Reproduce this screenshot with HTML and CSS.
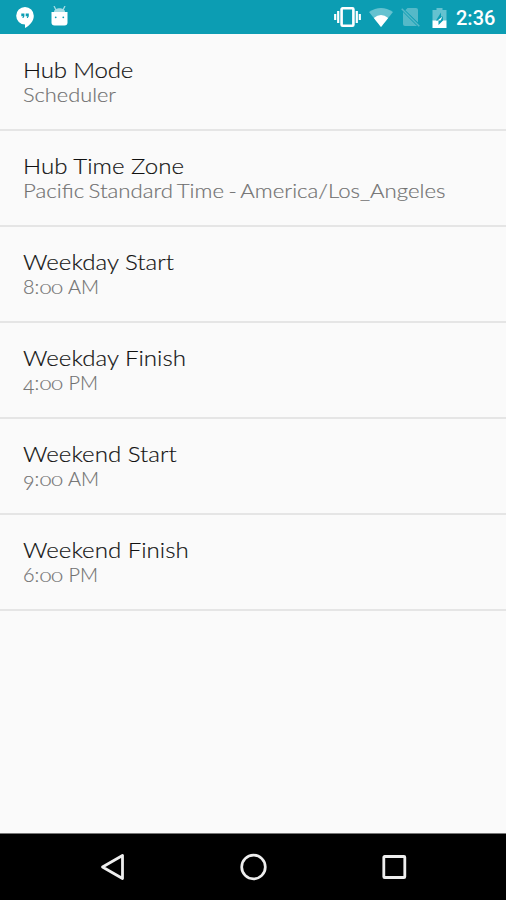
FILE: index.html
```html
<!DOCTYPE html>
<html lang="en">
<head>
    <meta charset="UTF-8">
    <meta name="viewport" content="width=device-width, initial-scale=1.0">
    <title>Hub Settings</title>
    <link rel="stylesheet" href="styles.css">
</head>
<body>
    <header class="status-bar">
        <div class="notifications">
            <!-- Hangouts -->
            <svg class="icon-chat" width="18" height="21" viewBox="0 0 18 21">
                <path fill="#fff" d="M9 0a8.8 8.8 0 1 0 0 17.6V21c5-2.500 8.800-7 8.800-12.200A8.800 8.800 0 0 0 9 0z"/>
                <path fill="#0c9db3" d="M5.300 6.500h3.100v2.800L7.400 11H6.300l.7-1.700H5.300zM9.700 6.500h3.100v2.800l-1 1.700h-1.100l.7-1.700H9.700z"/>
            </svg>
            <!-- Android debugging -->
            <svg class="icon-debug" width="17" height="20" viewBox="0 0 17 20">
                <path stroke="#a5dce4" stroke-width="1.300" d="M3 0l2 4M14 0l-2 4"/>
                <path fill="#a5dce4" d="M3 6c0-5 11-5 11 0z"/>
                <path fill="#fff" d="M.5 6h16v10.500q0 3-3 3h-10q-3 0-3-3z"/>
                <circle cx="4.700" cy="11.300" r=".9" fill="#0c9db3"/>
                <circle cx="12.300" cy="11.300" r=".9" fill="#0c9db3"/>
            </svg>
        </div>
        <div class="system">
            <!-- Vibrate -->
            <svg class="icon-vibrate" width="27" height="20" viewBox="0 0 27 20">
                <rect x="7.600" y="1.300" width="11.800" height="17.400" rx="1" fill="none" stroke="#fff" stroke-width="2.600"/>
                <path stroke="#fff" stroke-width="2.200" d="M4.200 4v12M1.200 7v6M22.800 4v12M25.800 7v6"/>
            </svg>
            <!-- Wi-Fi -->
            <svg class="icon-wifi" width="24" height="19" viewBox="0 0 24 19">
                <path fill="#65c2d0" d="M0 4Q12-4 24 4L12 19z"/>
                <path fill="#fff" d="M4.800 10Q12 4 19.200 10L12 19z"/>
            </svg>
            <!-- No SIM -->
            <svg class="icon-sim" width="19" height="20" viewBox="0 0 19 20">
                <path fill="#55b9c8" d="M6.500 1H15q2 0 2 2v12.500L4.300 3.200zM2 5l14 14H4q-2 0-2-2z"/>
                <path stroke="#55b9c8" stroke-width="1.500" d="M.7 1.800l17.600 17.500"/>
            </svg>
            <!-- Battery -->
            <svg class="icon-battery" width="15" height="20" viewBox="0 0 15 20">
                <path fill="#65c2d0" d="M4.500 0h6v2H14.500v11H.5V2h4z"/>
                <path fill="#fff" d="M.5 12.500h14V20H.5z"/>
                <path fill="#0c9db3" d="M9 4.500L4 12.500H11V8.500H9zM4 12.500h2.500V17l4.500-4.500z"/>
                <path fill="#fff" d="M10.500 8.500L5.500 12.500h3z"/>
            </svg>
            <span class="clock">2:36</span>
        </div>
    </header>

    <main class="settings">
        <div class="setting">
            <div class="title tight">Hub Mode</div>
            <div class="value">Scheduler</div>
        </div>
        <div class="setting">
            <div class="title">Hub Time Zone</div>
            <div class="value zone">Pacific Standard Time - America/Los_Angeles</div>
        </div>
        <div class="setting">
            <div class="title">Weekday Start</div>
            <div class="value time">8:<span class="zeros">00</span> AM</div>
        </div>
        <div class="setting">
            <div class="title">Weekday Finish</div>
            <div class="value time"><span class="low">4</span>:<span class="zeros">00</span> PM</div>
        </div>
        <div class="setting">
            <div class="title">Weekend Start</div>
            <div class="value time"><span class="low">9</span>:<span class="zeros">00</span> AM</div>
        </div>
        <div class="setting">
            <div class="title">Weekend Finish</div>
            <div class="value time">6:<span class="zeros">00</span> PM</div>
        </div>
    </main>

    <nav class="nav-bar">
        <svg width="28" height="30" viewBox="0 0 28 30">
            <path fill="none" stroke="#eee" stroke-width="2.800" stroke-linejoin="round" d="M23.500 3.500v23L3.500 15z"/>
        </svg>
        <svg width="28" height="30" viewBox="0 0 28 30">
            <circle cx="14.500" cy="15" r="11.800" fill="none" stroke="#eee" stroke-width="2.700"/>
        </svg>
        <svg width="28" height="30" viewBox="0 0 28 30">
            <rect x="3.800" y="4.500" width="21" height="21" rx=".8" fill="none" stroke="#eee" stroke-width="2.800"/>
        </svg>
    </nav>
</body>
</html>
```

FILE: styles.css
```css
* {
    box-sizing: border-box;
}
body {
    margin: 0;
    height: 900px;
    display: flex;
    flex-direction: column;
    background: #fafafa;
    font-family: Lato, "Liberation Sans", sans-serif;
    overflow: hidden;
}
svg {
    display: block;
    flex: none;
}
.status-bar {
    height: 34px;
    flex: none;
    display: flex;
    justify-content: space-between;
    padding: 0 11px 0 16px;
    background: #0c9db3;
}
.notifications,
.system {
    display: flex;
    align-items: flex-start;
}
.icon-chat {
    margin-top: 7px;
}
.icon-debug {
    margin: 6px 0 0 17px;
}
.icon-vibrate {
    margin-top: 7px;
}
.icon-wifi {
    margin: 8px 0 0 8px;
}
.icon-sim {
    margin: 7px 0 0 8px;
}
.icon-battery {
    margin: 8px 0 0 12px;
}
.clock {
    width: 39px;
    margin-left: 9px;
    color: #fff;
    font: 500 20px/36px Roboto, sans-serif;
    white-space: nowrap;
}
.settings {
    flex: 1;
    padding-top: 1px;
}
.setting {
    height: 96px;
    padding: 21px 23px 0;
    border-bottom: 2px solid #e5e5e5;
    font-weight: 300;
    white-space: nowrap;
}
.title {
    width: fit-content;
    color: #111;
    font-size: 22px;
    line-height: 27px;
    transform: scaleX(1.095);
    transform-origin: left;
    -webkit-text-stroke: 0.15px #111;
}
.tight {
    letter-spacing: -0.2px;
}
.value {
    width: fit-content;
    color: #707070;
    font-size: 19px;
    line-height: 23px;
    transform: scaleX(1.147);
    transform-origin: left;
    -webkit-text-stroke: 0.15px #707070;
}
.zone {
    word-spacing: -1.4px;
    transform: scaleX(1.17);
}
.time {
    transform: scaleX(1.045);
}
/* old-style figures */
.zeros {
    display: inline-block;
    margin-right: 6px;
    font-size: 14.5px;
    transform: scaleX(1.32);
    transform-origin: left;
}
.low {
    position: relative;
    top: 4px;
}
.nav-bar {
    height: 67px;
    flex: none;
    display: flex;
    justify-content: center;
    align-items: center;
    gap: 112.500px;
    background: #000;
    border-top: 1px solid #777;
}
```
